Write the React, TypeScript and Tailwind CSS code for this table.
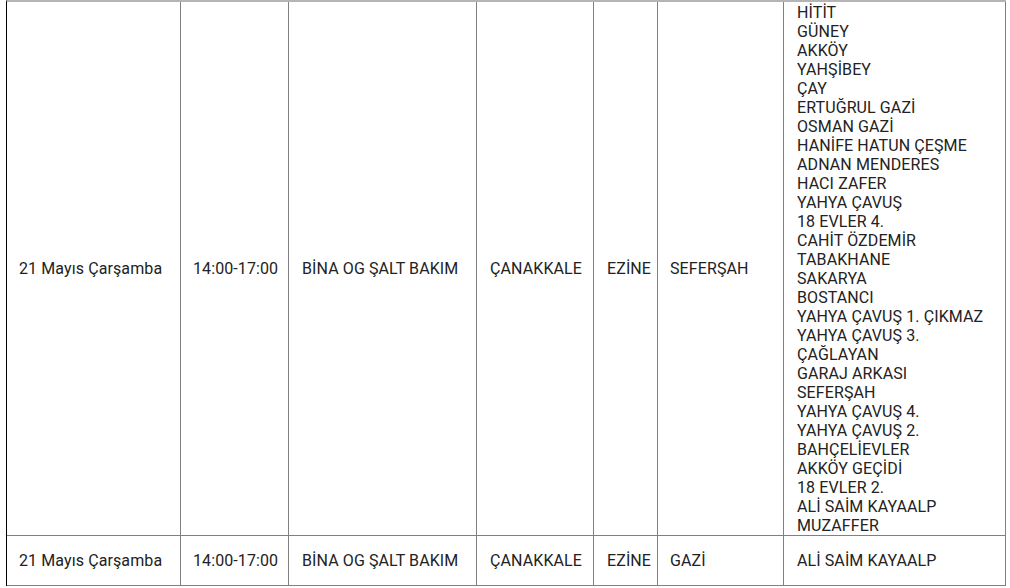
const streets = [
  "HİTİT",
  "GÜNEY",
  "AKKÖY",
  "YAHŞİBEY",
  "ÇAY",
  "ERTUĞRUL GAZİ",
  "OSMAN GAZİ",
  "HANİFE HATUN ÇEŞME",
  "ADNAN MENDERES",
  "HACI ZAFER",
  "YAHYA ÇAVUŞ",
  "18 EVLER 4.",
  "CAHİT ÖZDEMİR",
  "TABAKHANE",
  "SAKARYA",
  "BOSTANCI",
  "YAHYA ÇAVUŞ 1. ÇIKMAZ",
  "YAHYA ÇAVUŞ 3.",
  "ÇAĞLAYAN",
  "GARAJ ARKASI",
  "SEFERŞAH",
  "YAHYA ÇAVUŞ 4.",
  "YAHYA ÇAVUŞ 2.",
  "BAHÇELİEVLER",
  "AKKÖY GEÇİDİ",
  "18 EVLER 2.",
  "ALİ SAİM KAYAALP",
  "MUZAFFER",
];

const rows = [
  { date: "21 Mayıs Çarşamba", time: "14:00-17:00", reason: "BİNA OG ŞALT BAKIM", city: "ÇANAKKALE", district: "EZİNE", hood: "SEFERŞAH", streets },
  { date: "21 Mayıs Çarşamba", time: "14:00-17:00", reason: "BİNA OG ŞALT BAKIM", city: "ÇANAKKALE", district: "EZİNE", hood: "GAZİ", streets: ["ALİ SAİM KAYAALP"] },
];

const cell = "flex items-center pl-[12px] border-r border-b border-[#808080]";
const cellWide = "flex items-center pl-[13px] border-r border-b border-[#808080]";

export default function App() {
  return (
    <div className="w-[1010px] h-[588px] overflow-hidden bg-white text-[16px] leading-[19px] tracking-[0.1px] text-[#222]" style={{ fontFamily: "Roboto, 'Liberation Sans', sans-serif" }}>
      <div className="ml-[6px] w-[1000px] border-t-2 border-t-[#b4b4b4] border-l border-l-black grid grid-cols-[174px_108px_188px_117px_64px_126px_222px]">
        {rows.map((r, i) => (
          <div key={i} className="contents">
            <div className={cell}>{r.date}</div>
            <div className={cell}>{r.time}</div>
            <div className={cellWide}>{r.reason}</div>
            <div className={cellWide}>{r.city}</div>
            <div className={cellWide}>{r.district}</div>
            <div className={cell}>{r.hood}</div>
            <div
              className={
                r.streets.length > 1
                  ? "pl-[13px] pt-px border-r border-b border-[#808080] flex flex-col"
                  : "pl-[13px] h-[50px] border-r border-b border-[#808080] flex items-center"
              }
            >
              {r.streets.map((s) => (
                <span key={s}>{s}</span>
              ))}
            </div>
          </div>
        ))}
      </div>
    </div>
  );
}
